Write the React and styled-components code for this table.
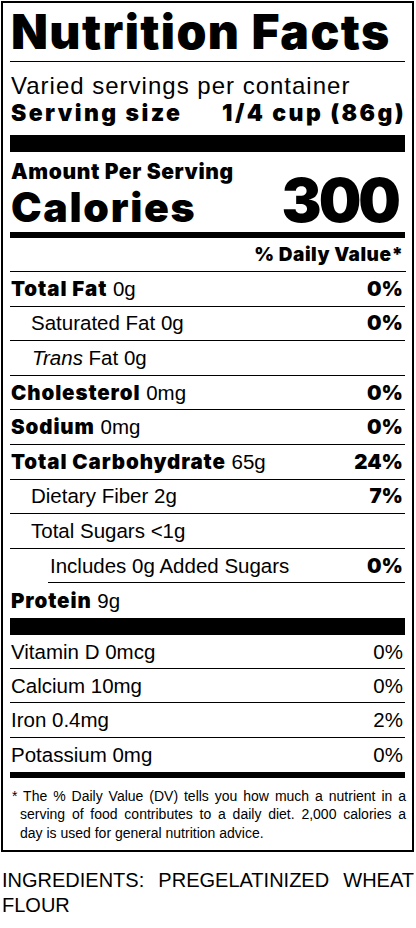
import React from 'react';
import styled, { createGlobalStyle } from 'styled-components';

const GlobalStyle = createGlobalStyle`
  body {
    margin: 0;
    background: #fff;
    color: #000;
    font-family: "Liberation Sans", Arial, sans-serif;
  }
`;

const BLACK = '"Inter", "Liberation Sans", Arial, sans-serif';

const Page = styled.div`
  width: 416px;
  padding-top: 1px;
`;

const Label = styled.section`
  box-sizing: border-box;
  width: 413px;
  margin-left: 1px;
  border: 2px solid #000;
  padding: 0 7px;
`;

const Title = styled.h1`
  margin: 0;
  height: 58px;
  border-bottom: 1px solid #000;
  font-family: ${BLACK};
  font-weight: 900;
  font-size: 48px;
  line-height: 58px;
  letter-spacing: 1.4px;
  padding-left: 1px;
  white-space: nowrap;
`;

const Servings = styled.div`
  height: 73px;
  padding-top: 11px;
  box-sizing: border-box;
`;

const ServingsPer = styled.div`
  font-size: 24px;
  line-height: 26px;
  letter-spacing: 1px;
  padding-left: 1px;
  white-space: nowrap;
`;

const ServingSize = styled.div`
  display: flex;
  justify-content: space-between;
  font-family: ${BLACK};
  font-weight: 900;
  font-size: 23px;
  line-height: 28px;
  letter-spacing: 2.4px;
  padding-left: 1px;
  margin-right: -1px;
  white-space: nowrap;
`;

const Bar = styled.div`
  height: ${(p) => p.$h}px;
  background: #000;
`;

const Amount = styled.div`
  height: 80px;
  box-sizing: border-box;
  padding: 9px 4px 0 1px;
  font-family: ${BLACK};
  font-weight: 900;
`;

const AmountHead = styled.div`
  font-size: 21px;
  line-height: 22px;
  letter-spacing: 0.6px;
`;

const CaloriesRow = styled.div`
  display: flex;
  justify-content: space-between;
  align-items: baseline;
  margin-top: -11px;
`;

const CaloriesLabel = styled.span`
  font-size: 41px;
  line-height: 56px;
  letter-spacing: 1.7px;
`;

const CaloriesValue = styled.span`
  font-size: 60px;
  line-height: 56px;
  letter-spacing: -3px;
  margin-right: 3px;
`;

const DVHead = styled.div`
  height: 34px;
  box-sizing: border-box;
  border-bottom: 1px solid #000;
  text-align: right;
  padding: 7px 2px 0 0;
  font-family: ${BLACK};
  font-weight: 900;
  font-size: 19px;
  line-height: 20px;
  letter-spacing: 0.5px;
  margin-right: -0.5px;
`;

const Row = styled.div`
  display: flex;
  justify-content: space-between;
  align-items: center;
  height: ${(p) => p.$h}px;
  box-sizing: border-box;
  border-bottom: ${(p) => (p.$last ? 'none' : '1px solid #000')};
  margin-left: ${(p) => (p.$lineIndent ? 38 : 0)}px;
  padding-left: ${(p) => p.$indent + 1}px;
  padding-right: 2px;
  font-size: 20.5px;
  line-height: 24px;
  white-space: nowrap;
`;

const Strong = styled.b`
  font-family: ${BLACK};
  font-weight: 900;
  letter-spacing: 0.9px;
`;

const Pct = styled.span`
  font-family: ${(p) => (p.$plain ? 'inherit' : BLACK)};
  font-weight: ${(p) => (p.$plain ? 400 : 900)};
`;

const Footnote = styled.div`
  padding: 9px 0 8px 10px;
  font-size: 14px;
  line-height: 18.5px;
`;

const FootLine = styled.span`
  display: block;
  white-space: nowrap;
  text-align: ${(p) => (p.$last ? 'left' : 'justify')};
  text-align-last: ${(p) => (p.$last ? 'left' : 'justify')};
  white-space: normal;
  margin-left: ${(p) => (p.$first ? -8 : 0)}px;
  margin-right: -1px;
`;

const Ingredients = styled.p`
  margin: 16px 0 0 2px;
  width: 412px;
  font-size: 20px;
  line-height: 25px;
  text-align: justify;
`;

const nutrients = [
  { bold: 'Total Fat', amount: '0g', pct: '0%' },
  { label: 'Saturated Fat 0g', pct: '0%', indent: 20 },
  { italic: 'Trans', label: ' Fat 0g', indent: 21 },
  { bold: 'Cholesterol', amount: '0mg', pct: '0%' },
  { bold: 'Sodium', amount: '0mg', pct: '0%' },
  { bold: 'Total Carbohydrate', amount: '65g', pct: '24%' },
  { label: 'Dietary Fiber 2g', pct: '7%', indent: 20 },
  { label: 'Total Sugars <1g', indent: 20 },
  { label: 'Includes 0g Added Sugars', pct: '0%', indent: 1, lineIndent: true },
  { bold: 'Protein', amount: '9g', last: true },
];

const vitamins = [
  { label: 'Vitamin D 0mcg', pct: '0%' },
  { label: 'Calcium 10mg', pct: '0%' },
  { label: 'Iron 0.4mg', pct: '2%' },
  { label: 'Potassium 0mg', pct: '0%', last: true },
];

const footnote = [
  '* The % Daily Value (DV) tells you how much a nutrient in a',
  'serving of food contributes to a daily diet. 2,000 calories a',
  'day is used for general nutrition advice.',
];

const NutrientRow = ({ n }) => (
  <Row $h={34.6} $indent={n.indent || 0} $lineIndent={n.lineIndent} $last={n.last}>
    <span>
      {n.bold && <Strong>{n.bold}</Strong>}
      {n.amount && ` ${n.amount}`}
      {n.italic && <i>{n.italic}</i>}
      {n.label}
    </span>
    {n.pct && <Pct>{n.pct}</Pct>}
  </Row>
);

const App = () => (
  <Page>
    <GlobalStyle />
    <Label>
      <Title>Nutrition Facts</Title>
      <Servings>
        <ServingsPer>Varied servings per container</ServingsPer>
        <ServingSize>
          <span>Serving size</span>
          <span>1/4 cup (86g)</span>
        </ServingSize>
      </Servings>
      <Bar $h={17} />
      <Amount>
        <AmountHead>Amount Per Serving</AmountHead>
        <CaloriesRow>
          <CaloriesLabel>Calories</CaloriesLabel>
          <CaloriesValue>300</CaloriesValue>
        </CaloriesRow>
      </Amount>
      <Bar $h={6} />
      <DVHead>% Daily Value*</DVHead>
      {nutrients.map((n) => (
        <NutrientRow key={n.bold || n.italic || n.label} n={n} />
      ))}
      <Bar $h={17} />
      {vitamins.map((v) => (
        <Row key={v.label} $h={34.25} $indent={0} $last={v.last}>
          <span>{v.label}</span>
          <Pct $plain>{v.pct}</Pct>
        </Row>
      ))}
      <Bar $h={6} />
      <Footnote>
        {footnote.map((line, i) => (
          <FootLine key={line} $first={i === 0} $last={i === footnote.length - 1}>
            {line}
          </FootLine>
        ))}
      </Footnote>
    </Label>
    <Ingredients>INGREDIENTS: PREGELATINIZED WHEAT FLOUR</Ingredients>
  </Page>
);

export default App;
